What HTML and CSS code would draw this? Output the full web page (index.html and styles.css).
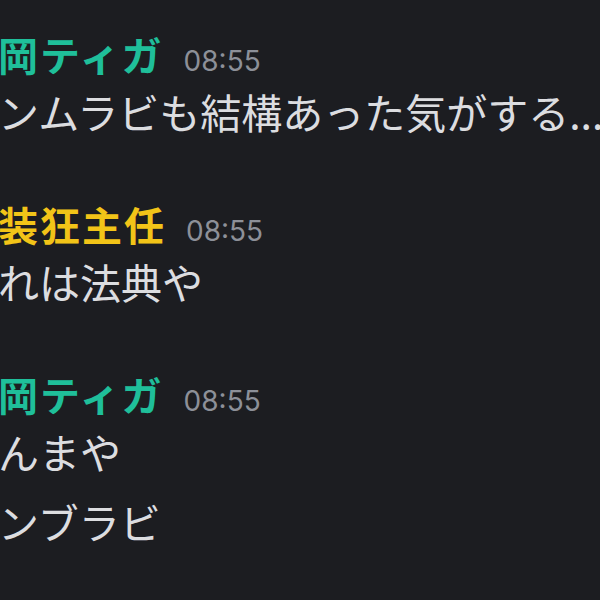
FILE: index.html
```html
<!DOCTYPE html>
<html lang="ja">
<head>
<meta charset="utf-8">
<title>チャット</title>
<link rel="stylesheet" href="styles.css">
</head>
<body>
<main class="chat">
  <section class="msg">
    <header class="head">
      <span class="name teal">岡ティガ</span>
      <time class="time">08:55</time>
    </header>
    <p class="line">ンムラビも結構あった気がする...</p>
  </section>
  <section class="msg">
    <header class="head">
      <span class="name gold">装狂主任</span>
      <time class="time">08:55</time>
    </header>
    <p class="line">れは法典や</p>
  </section>
  <section class="msg">
    <header class="head">
      <span class="name teal">岡ティガ</span>
      <time class="time">08:55</time>
    </header>
    <p class="line">んまや</p>
    <p class="line">ンブラビ</p>
  </section>
</main>
</body>
</html>
```
FILE: styles.css
```css
html, body {
  margin: 0;
  padding: 0;
  background: #1c1d21;
  overflow: hidden;
}

.chat {
  display: flex;
  flex-direction: column;
  gap: 50px;
  padding-top: 26px;
  margin-left: -2px;
  font-family: "Noto Sans CJK JP", "Noto Sans", sans-serif;
  white-space: nowrap;
}

.msg {
  display: flex;
  flex-direction: column;
}

.head {
  display: flex;
  align-items: baseline;
  gap: 20px;
  height: 50px;
}

.name {
  font-size: 40px;
  font-weight: 700;
  letter-spacing: 2px;
  line-height: 56px;
}

.teal { color: #1fbf9a; }
.gold { color: #f2c418; }

.time {
  font-family: Inter, "Noto Sans", sans-serif;
  font-size: 28px;
  color: #8d9098;
}

.line {
  margin: 0;
  font-size: 41px;
  line-height: 70px;
  color: #dcdde0;
}
```
